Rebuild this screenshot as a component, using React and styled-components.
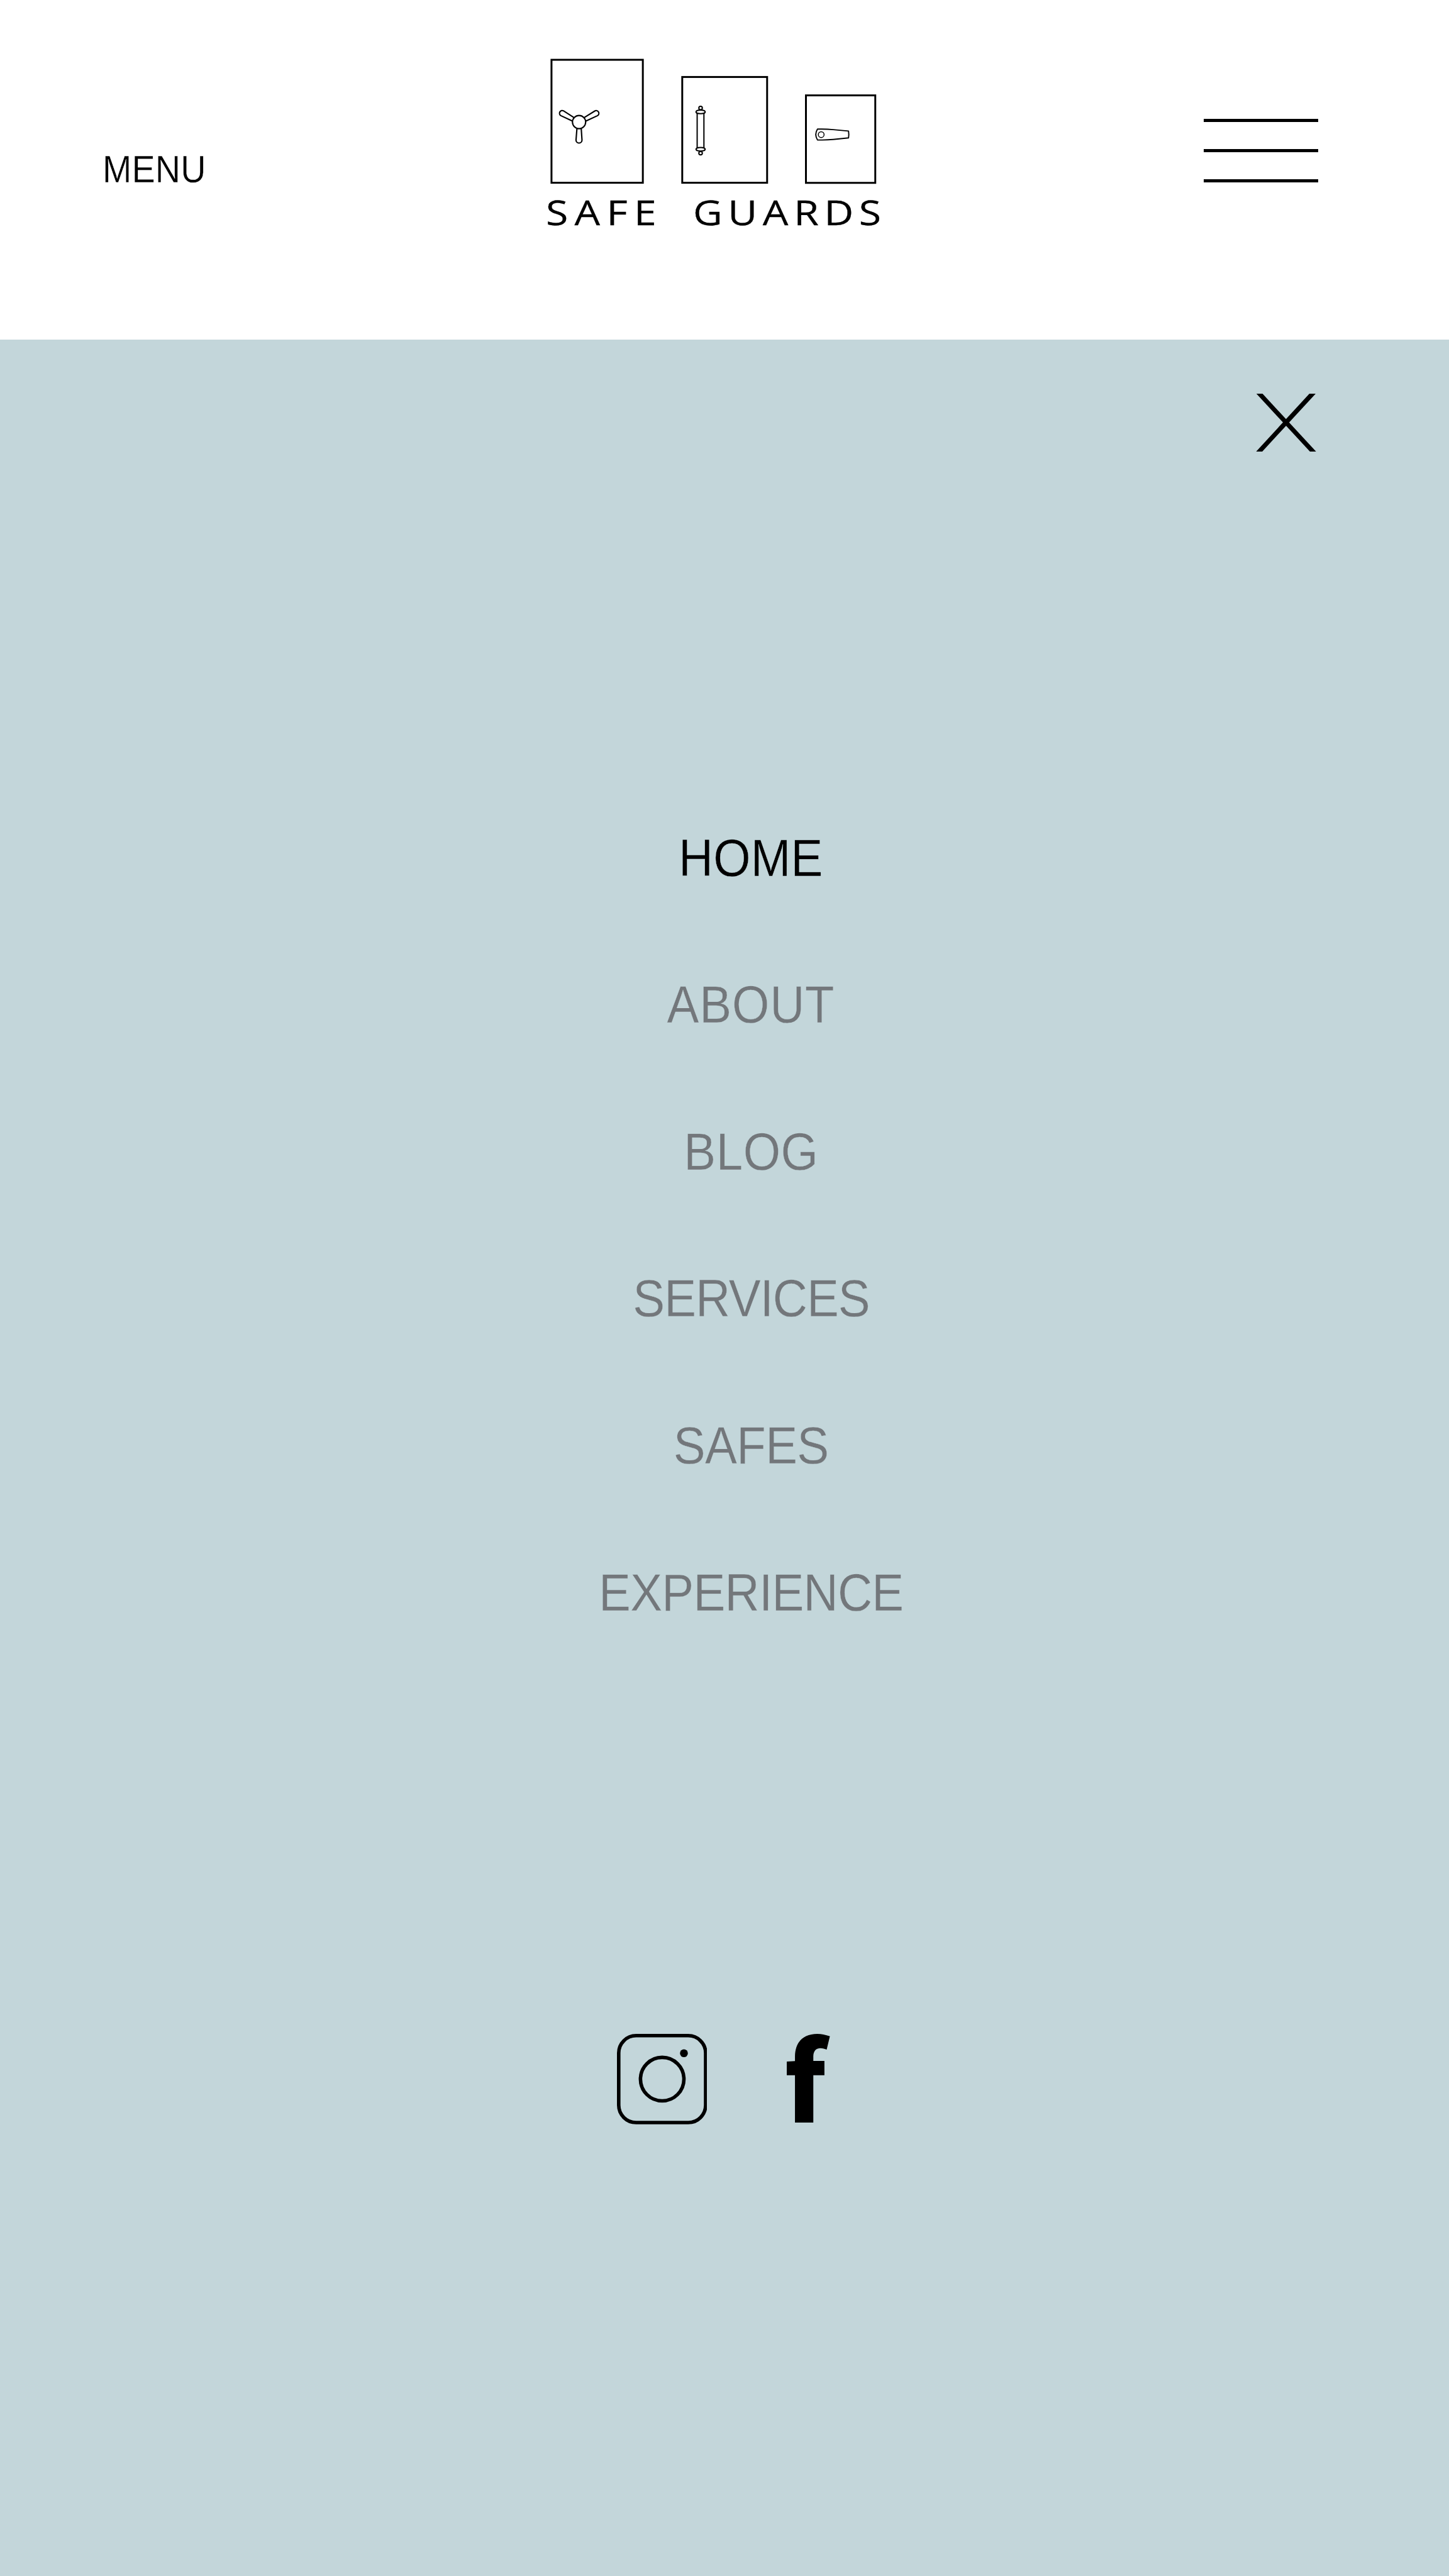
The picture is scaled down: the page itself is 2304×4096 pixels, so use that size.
import React from 'react';
import styled, { createGlobalStyle } from 'styled-components';

// The artboard is 3001 units wide; u() converts artboard units to pixels.
const SCALE = 2304 / 3001;
const u = (n) => `${(n * SCALE).toFixed(2)}px`;

const INK = '#000000';
const MUTED = '#73777b';
const PANEL = '#c3d6da';

const GlobalStyle = createGlobalStyle`
  *, *::before, *::after { box-sizing: border-box; }
  html, body { margin: 0; padding: 0; background: ${PANEL}; }
  body { font-family: "Liberation Sans", Arial, Helvetica, sans-serif; color: ${INK}; }
`;

const Page = styled.div`
  display: flex;
  flex-direction: column;
  width: 2304px;
  height: 4096px;
  overflow: hidden;
`;

const Header = styled.header`
  display: flex;
  align-items: flex-start;
  height: ${u(703)};
  padding: ${u(121)} ${u(271.3)} 0 ${u(212.5)};
  background: #ffffff;
`;

const MenuLabel = styled.span`
  flex: 0 0 ${u(300)};
  margin-top: ${u(180.3)};
  font-size: ${u(78.8)};
  line-height: ${u(100)};
  letter-spacing: 0.2px;
  transform: scaleX(0.92);
  transform-origin: left center;
  -webkit-text-stroke: 0.4px #ffffff;
`;

const Brand = styled.a`
  display: flex;
  flex-direction: column;
  flex: 0 0 ${u(700)};
  margin: 0 auto 0 ${u(618.1)};
  color: inherit;
`;

const Doors = styled.svg`
  display: block;
  width: ${u(700)};
  height: ${u(262)};
`;

const Wordmark = styled.div`
  display: flex;
  margin-top: ${u(6.8)};
  font-family: "Open Sans", "Noto Sans", sans-serif;
  font-size: ${u(71)};
  line-height: ${u(100)};
  -webkit-text-stroke: 0.3px ${INK};
`;

const Word = styled.span`
  flex: 0 0 ${(p) => u(p.$width)};
  letter-spacing: ${(p) => p.$tracking}px;
  white-space: nowrap;
  transform: scaleX(1.18);
  transform-origin: left center;
`;

const Burger = styled.button`
  display: flex;
  flex-direction: column;
  gap: ${u(56.1)};
  width: ${u(237)};
  margin: ${u(125)} 0 0;
  padding: 0;
  border: 0;
  background: none;
`;

const BurgerLine = styled.span`
  height: ${u(6.6)};
  background: ${INK};
`;

const Panel = styled.main`
  display: flex;
  flex: 1;
  flex-direction: column;
  background: ${PANEL};
`;

const CloseRow = styled.div`
  display: flex;
  justify-content: flex-end;
  padding: ${u(112)} ${u(275)} 0 0;
`;

const CloseButton = styled.button`
  display: block;
  padding: 0;
  border: 0;
  background: none;
`;

const CloseIcon = styled.svg`
  display: block;
  width: ${u(125)};
  height: ${u(120)};
`;

const MenuList = styled.ul`
  display: flex;
  flex-direction: column;
  align-items: center;
  margin: ${u(690.3)} 0 0;
  padding: 0 0 0 ${u(109.5)};
  list-style: none;
`;

const MenuItem = styled.li`
  height: ${u(304.2)};
  font-size: ${u(108)};
  line-height: ${u(304.2)};
  letter-spacing: ${(p) => p.$tracking}px;
  color: ${(p) => (p.$active ? INK : MUTED)};
  transform: scaleX(0.92);
  -webkit-text-stroke: 0.4px ${PANEL};
`;

const Socials = styled.div`
  display: flex;
  align-items: flex-start;
  gap: ${u(165.4)};
  padding: ${u(762.3)} 0 0 ${u(1277.3)};
`;

const InstagramIcon = styled.svg`
  display: block;
  width: ${u(187.3)};
  height: ${u(187.3)};
`;

const FacebookIcon = styled.svg`
  display: block;
  width: ${u(90)};
  height: ${u(184)};
`;

const ITEMS = [
  { label: 'HOME', tracking: 0.2, active: true },
  { label: 'ABOUT', tracking: 0.9 },
  { label: 'BLOG', tracking: 0.6 },
  { label: 'SERVICES', tracking: -1.1 },
  { label: 'SAFES', tracking: -0.7 },
  { label: 'EXPERIENCE', tracking: -0.8 },
];

function SafeDoors() {
  return (
    <Doors viewBox="1130 121 700 262" fill="none" stroke={INK} aria-hidden="true">
      <g strokeWidth="3.9">
        <rect x="1141.6" y="123.7" width="189.2" height="254.7" />
        <rect x="1412.4" y="159.3" width="175.8" height="219.1" />
        <rect x="1668.6" y="197.4" width="143.6" height="181.2" />
      </g>
      {/* spoked wheel */}
      <g strokeWidth="2.8">
        <path d="M1188 243.2L1166.8 229.6A5.5 5.5 0 0 0 1161 239.4L1185 250.6" />
        <path d="M1209.5 243.2L1231.3 229.8A5.5 5.5 0 0 1 1237 239.4L1212.8 250.6" />
        <path d="M1194.3 266L1192.4 290A6.2 6.2 0 0 0 1204.8 290L1203.2 266" />
        <circle cx="1198.7" cy="252.7" r="13.7" fill="#ffffff" />
      </g>
      {/* pull bar */}
      <g strokeWidth="2.6">
        <path d="M1443.3 234V307M1457.3 234V307" />
        <circle cx="1450.4" cy="223.7" r="3.6" />
        <circle cx="1450.4" cy="317" r="3.6" />
        <ellipse cx="1450.4" cy="231.6" rx="9.5" ry="3.7" fill="#ffffff" />
        <ellipse cx="1450.4" cy="309" rx="9.5" ry="3.7" fill="#ffffff" />
      </g>
      {/* lever */}
      <path
        strokeWidth="2.5"
        strokeLinejoin="round"
        d="M1692.5 267.3Q1710 266.8 1725 268.3L1756.8 271.3Q1758 278.5 1756.8 285.5L1725 288.8Q1710 290.3 1692.5 289.7Q1685.5 278.7 1692.5 267.3Z"
      />
      <circle cx="1700.2" cy="278.7" r="6" strokeWidth="1.9" />
    </Doors>
  );
}

export default function App() {
  return (
    <Page>
      <GlobalStyle />
      <Header>
        <MenuLabel>MENU</MenuLabel>
        <Brand>
          <SafeDoors />
          <Wordmark>
            <Word $width={304.4} $tracking={8.7}>SAFE</Word>
            <Word $width={395.6} $tracking={7.3}>GUARDS</Word>
          </Wordmark>
        </Brand>
        <Burger aria-label="Open menu">
          <BurgerLine />
          <BurgerLine />
          <BurgerLine />
        </Burger>
      </Header>
      <Panel>
        <CloseRow>
          <CloseButton aria-label="Close menu">
            <CloseIcon viewBox="2601 815 125 120" fill={INK}>
              <path d="M2602 815H2614.7L2725.7 935H2713Z" />
              <path d="M2711.7 815H2724.7L2614 935H2601.3Z" />
            </CloseIcon>
          </CloseButton>
        </CloseRow>
        <MenuList>
          {ITEMS.map((item) => (
            <MenuItem key={item.label} $tracking={item.tracking} $active={item.active}>
              {item.label}
            </MenuItem>
          ))}
        </MenuList>
        <Socials>
          <InstagramIcon viewBox="0 0 187.3 187.3" fill="none" stroke={INK} strokeWidth="7.3">
            <rect x="3.65" y="3.65" width="180" height="180" rx="36" />
            <circle cx="93.7" cy="93.7" r="45" />
            <circle cx="138.7" cy="40" r="8.2" fill={INK} stroke="none" />
          </InstagramIcon>
          <FacebookIcon viewBox="1110 67 270 552" fill={INK}>
            <path d="M1161 618H1275V324H1344V235H1275V205C1277 169 1296 156 1318 156C1334 157 1347 160 1358 165L1378 82C1350 72 1325 67 1300 67C1213 67 1163 117 1161 205V236L1110 239V324H1161Z" />
          </FacebookIcon>
        </Socials>
      </Panel>
    </Page>
  );
}
